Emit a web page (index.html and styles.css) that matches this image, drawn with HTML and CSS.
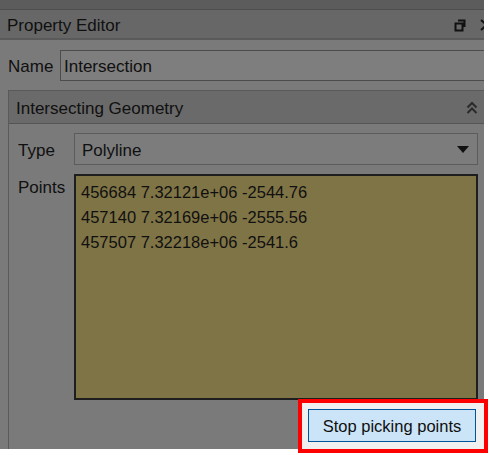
FILE: index.html
```html
<!DOCTYPE html>
<html>
<head>
<meta charset="utf-8">
<link rel="stylesheet" href="styles.css">
</head>
<body>
<div class="page">
<div class="dock">
  <div class="topstrip"></div>
  <div class="titlebar">
    <span class="title">Property Editor</span>
    <span class="title-icons">
      <svg class="ico-float" width="12" height="13" viewBox="0 0 12 13"><path d="M4 1.5h6.5v6.5M1.5 4.5h7v7h-7z" fill="none" stroke="#111" stroke-width="2"/></svg>
      <svg class="ico-close" width="10" height="12" viewBox="0 0 10 12"><path d="M1 1l7 6M1 11l7-6" fill="none" stroke="#111" stroke-width="2"/></svg>
    </span>
  </div>
  <div class="content">
    <div class="name-row">
      <span class="lbl">Name</span>
      <div class="input">Intersection</div>
    </div>
    <div class="group">
      <div class="group-head">
        <span class="ghead-text">Intersecting Geometry</span>
        <svg class="chev" width="12" height="14" viewBox="0 0 12 14"><path d="M1.5 6.5L6 2l4.5 4.5M1.5 12L6 7.5l4.5 4.5" fill="none" stroke="#2a2a2a" stroke-width="2"/></svg>
      </div>
      <div class="group-body">
        <div class="row type-row">
          <span class="lbl2">Type</span>
          <div class="combo"><span class="combo-text">Polyline</span><span class="arrow"></span></div>
        </div>
        <div class="row points-row">
          <span class="lbl2">Points</span>
          <div class="points">
            <div>456684 7.32121e+06 -2544.76</div>
            <div>457140 7.32169e+06 -2555.56</div>
            <div>457507 7.32218e+06 -2541.6</div>
          </div>
        </div>
      </div>
    </div>
  </div>
</div>
<div class="highlight">
  <button class="btn">Stop picking points</button>
</div>
</div>
</body>
</html>
```
FILE: styles.css
```css
html, body {
  margin: 0;
  padding: 0;
  background: #ffffff;
}
body {
  font-family: "Liberation Sans", Arial, sans-serif;
  font-size: 17px;
  color: #101010;
}
.page {
  position: relative;
  width: 489px;
  height: 455px;
}
.dock {
  width: 484px;
  height: 449px;
  background: #7a7a7a;
  overflow: hidden;
}
.topstrip {
  height: 9px;
  background: #5c5c5c;
  border-bottom: 1px solid #4e4e4e;
}
.titlebar {
  height: 28px;
  background: #676767;
  border-bottom: 2px solid #5a5a5a;
  display: flex;
  align-items: center;
  justify-content: space-between;
  padding-left: 7px;
}
.title {
  padding-top: 4px;
}
.title-icons {
  display: flex;
  align-items: center;
  gap: 14px;
  margin-right: -6px;
  padding-top: 2px;
}
.content {
  padding: 10px 0 0 8px;
}
.name-row {
  display: flex;
  align-items: center;
  gap: 7px;
  height: 31px;
}
.lbl {
  width: 45px;
  padding-top: 3px;
}
.input {
  flex: 1;
  height: 29px;
  line-height: 32px;
  background: #7e7e7e;
  border: 1px solid #4c4c4c;
  border-right: none;
  padding-left: 3px;
}
.group {
  margin-top: 9px;
  border: 1px solid #5a5a5a;
  border-right: none;
  height: 400px;
}
.group-head {
  height: 32px;
  background: #6a6a6a;
  border-bottom: 1px solid #555;
  display: flex;
  align-items: center;
  justify-content: space-between;
  padding: 0 6px 0 7px;
}
.ghead-text {
  padding-top: 4px;
}
.chev {
  margin-top: 2px;
}
.group-body {
  padding: 9px 6px 0 9px;
}
.row {
  display: flex;
  gap: 8px;
}
.lbl2 {
  width: 48px;
}
.type-row {
  align-items: center;
  height: 32px;
}
.type-row .lbl2 {
  padding-top: 4px;
}
.combo {
  flex: 1;
  height: 30px;
  border: 1px solid #5c5c5c;
  background: #7c7c7c;
  display: flex;
  align-items: center;
  justify-content: space-between;
  padding: 0 8px 0 7px;
}
.combo-text {
  padding-top: 3px;
}
.arrow {
  width: 0;
  height: 0;
  border-left: 6px solid transparent;
  border-right: 6px solid transparent;
  border-top: 7px solid #111;
}
.points-row {
  margin-top: 9px;
}
.points-row .lbl2 {
  padding-top: 4px;
}
.points {
  flex: 1;
  height: 218px;
  background: #7f7446;
  border: 2px solid #1e1e1e;
  padding: 4px 0 0 5px;
  line-height: 25px;
  font-size: 16.5px;
}
.highlight {
  position: absolute;
  left: 298px;
  top: 399px;
  width: 176px;
  height: 40px;
  border: 4px solid #ff0000;
  background: #f0f0f0;
  padding: 6px 0 0 6px;
}
.btn {
  display: block;
  width: 168px;
  height: 33px;
  background: #cce4f7;
  border: 1px solid #005499;
  font-family: "Liberation Sans", Arial, sans-serif;
  font-size: 16.5px;
  color: #101010;
  padding: 2px 0 0;
}
```
